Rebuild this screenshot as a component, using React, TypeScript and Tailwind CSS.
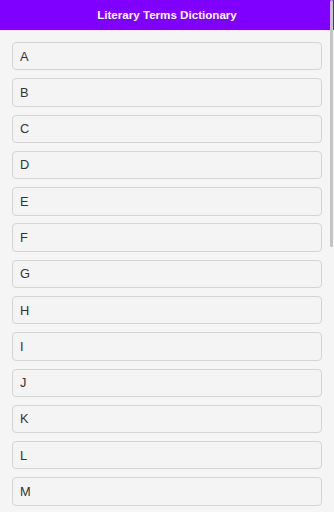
const letters = "ABCDEFGHIJKLMNOPQRSTUVWXYZ".split("")

export default function App() {
  return (
    <div className="relative h-screen overflow-y-auto bg-[#f5f5f5] font-['Liberation_Sans',Arial,sans-serif]">
      {/* header */}
      <div className="flex h-[29.5px] items-center justify-center bg-[#7f00ff]">
        <h1 className="text-[11.6px] font-bold text-white">Literary Terms Dictionary</h1>
      </div>

      {/* letter list */}
      <div className="px-3 pb-[90px] pt-[12.5px]">
        {letters.map((l) => (
          <div
            key={l}
            className="mb-[7.9px] flex h-[28.4px] items-center rounded-[4px] border border-[#d4d4d4] bg-[#f4f4f4] px-[7px] text-[12.8px] text-[#333]"
          >
            {l}
          </div>
        ))}
      </div>

      {/* scrollbar thumb */}
      <div className="pointer-events-none fixed right-[1px] top-0 h-[247px] w-[3px] rounded-full bg-[#c4c4c4]" />
    </div>
  )
}
